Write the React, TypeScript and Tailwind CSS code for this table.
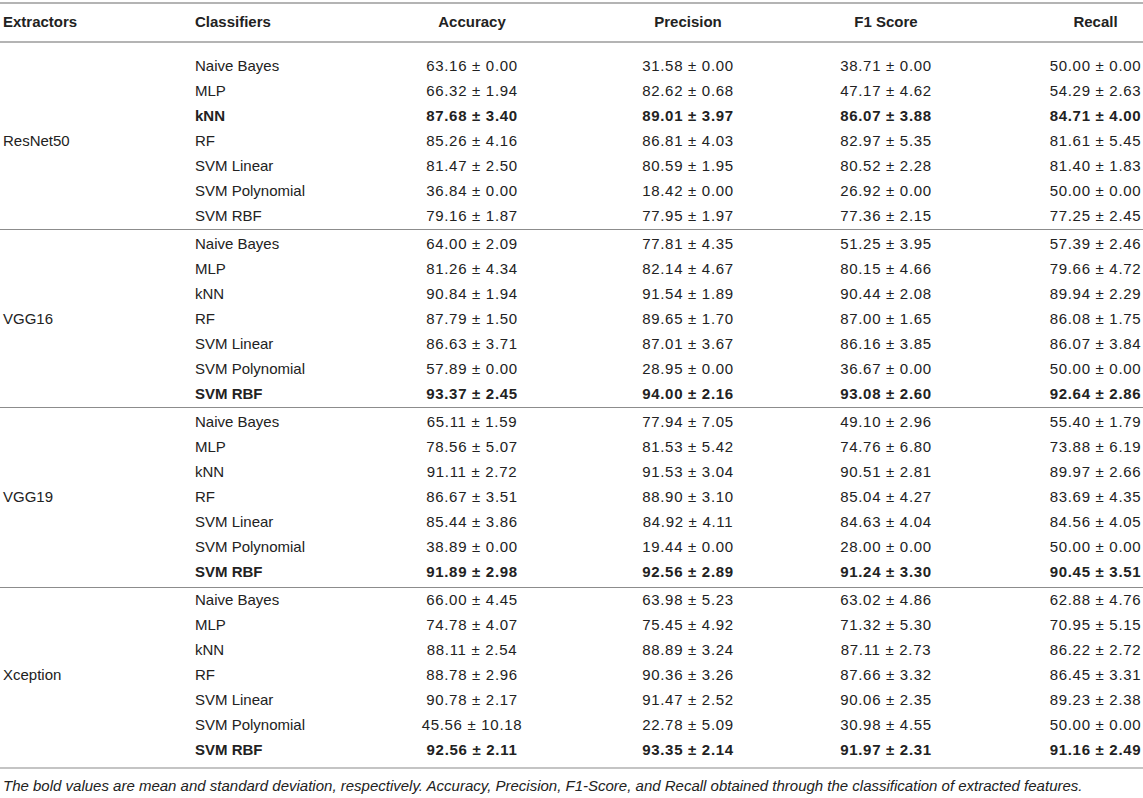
import React from 'react';

type Row = { name: string; acc: string; prec: string; f1: string; rec: string; bold?: boolean };
type Group = { extractor: string; pad: string; rows: Row[] };

const groups: Group[] = [
  {
    extractor: 'ResNet50',
    pad: 'pt-[11px] pb-0',
    rows: [
      { name: 'Naive Bayes', acc: '63.16 ± 0.00', prec: '31.58 ± 0.00', f1: '38.71 ± 0.00', rec: '50.00 ± 0.00' },
      { name: 'MLP', acc: '66.32 ± 1.94', prec: '82.62 ± 0.68', f1: '47.17 ± 4.62', rec: '54.29 ± 2.63' },
      { name: 'kNN', acc: '87.68 ± 3.40', prec: '89.01 ± 3.97', f1: '86.07 ± 3.88', rec: '84.71 ± 4.00', bold: true },
      { name: 'RF', acc: '85.26 ± 4.16', prec: '86.81 ± 4.03', f1: '82.97 ± 5.35', rec: '81.61 ± 5.45' },
      { name: 'SVM Linear', acc: '81.47 ± 2.50', prec: '80.59 ± 1.95', f1: '80.52 ± 2.28', rec: '81.40 ± 1.83' },
      { name: 'SVM Polynomial', acc: '36.84 ± 0.00', prec: '18.42 ± 0.00', f1: '26.92 ± 0.00', rec: '50.00 ± 0.00' },
      { name: 'SVM RBF', acc: '79.16 ± 1.87', prec: '77.95 ± 1.97', f1: '77.36 ± 2.15', rec: '77.25 ± 2.45' },
    ],
  },
  {
    extractor: 'VGG16',
    pad: 'pt-[2px] pb-0',
    rows: [
      { name: 'Naive Bayes', acc: '64.00 ± 2.09', prec: '77.81 ± 4.35', f1: '51.25 ± 3.95', rec: '57.39 ± 2.46' },
      { name: 'MLP', acc: '81.26 ± 4.34', prec: '82.14 ± 4.67', f1: '80.15 ± 4.66', rec: '79.66 ± 4.72' },
      { name: 'kNN', acc: '90.84 ± 1.94', prec: '91.54 ± 1.89', f1: '90.44 ± 2.08', rec: '89.94 ± 2.29' },
      { name: 'RF', acc: '87.79 ± 1.50', prec: '89.65 ± 1.70', f1: '87.00 ± 1.65', rec: '86.08 ± 1.75' },
      { name: 'SVM Linear', acc: '86.63 ± 3.71', prec: '87.01 ± 3.67', f1: '86.16 ± 3.85', rec: '86.07 ± 3.84' },
      { name: 'SVM Polynomial', acc: '57.89 ± 0.00', prec: '28.95 ± 0.00', f1: '36.67 ± 0.00', rec: '50.00 ± 0.00' },
      { name: 'SVM RBF', acc: '93.37 ± 2.45', prec: '94.00 ± 2.16', f1: '93.08 ± 2.60', rec: '92.64 ± 2.86', bold: true },
    ],
  },
  {
    extractor: 'VGG19',
    pad: 'pt-[2px] pb-[2px]',
    rows: [
      { name: 'Naive Bayes', acc: '65.11 ± 1.59', prec: '77.94 ± 7.05', f1: '49.10 ± 2.96', rec: '55.40 ± 1.79' },
      { name: 'MLP', acc: '78.56 ± 5.07', prec: '81.53 ± 5.42', f1: '74.76 ± 6.80', rec: '73.88 ± 6.19' },
      { name: 'kNN', acc: '91.11 ± 2.72', prec: '91.53 ± 3.04', f1: '90.51 ± 2.81', rec: '89.97 ± 2.66' },
      { name: 'RF', acc: '86.67 ± 3.51', prec: '88.90 ± 3.10', f1: '85.04 ± 4.27', rec: '83.69 ± 4.35' },
      { name: 'SVM Linear', acc: '85.44 ± 3.86', prec: '84.92 ± 4.11', f1: '84.63 ± 4.04', rec: '84.56 ± 4.05' },
      { name: 'SVM Polynomial', acc: '38.89 ± 0.00', prec: '19.44 ± 0.00', f1: '28.00 ± 0.00', rec: '50.00 ± 0.00' },
      { name: 'SVM RBF', acc: '91.89 ± 2.98', prec: '92.56 ± 2.89', f1: '91.24 ± 3.30', rec: '90.45 ± 3.51', bold: true },
    ],
  },
  {
    extractor: 'Xception',
    pad: 'pt-0 pb-[4px]',
    rows: [
      { name: 'Naive Bayes', acc: '66.00 ± 4.45', prec: '63.98 ± 5.23', f1: '63.02 ± 4.86', rec: '62.88 ± 4.76' },
      { name: 'MLP', acc: '74.78 ± 4.07', prec: '75.45 ± 4.92', f1: '71.32 ± 5.30', rec: '70.95 ± 5.15' },
      { name: 'kNN', acc: '88.11 ± 2.54', prec: '88.89 ± 3.24', f1: '87.11 ± 2.73', rec: '86.22 ± 2.72' },
      { name: 'RF', acc: '88.78 ± 2.96', prec: '90.36 ± 3.26', f1: '87.66 ± 3.32', rec: '86.45 ± 3.31' },
      { name: 'SVM Linear', acc: '90.78 ± 2.17', prec: '91.47 ± 2.52', f1: '90.06 ± 2.35', rec: '89.23 ± 2.38' },
      { name: 'SVM Polynomial', acc: '45.56 ± 10.18', prec: '22.78 ± 5.09', f1: '30.98 ± 4.55', rec: '50.00 ± 0.00' },
      { name: 'SVM RBF', acc: '92.56 ± 2.11', prec: '93.35 ± 2.14', f1: '91.97 ± 2.31', rec: '91.16 ± 2.49', bold: true },
    ],
  },
];

const cols = 'grid grid-cols-[180px_204px_228px_168px_1fr] items-center';

function Cells({ a, b, c, d, e, num }: { a: string; b: string; c: string; d: string; e: string; num?: boolean }) {
  const t = num ? 'tracking-[0.7px]' : '';
  return (
    <>
      <div className="pl-[5px] whitespace-nowrap">{a}</div>
      <div className={`text-center whitespace-nowrap ${t}`}>{b}</div>
      <div className={`text-center whitespace-nowrap ${t}`}>{c}</div>
      <div className={`text-center whitespace-nowrap ${t}`}>{d}</div>
      <div className={`pl-[78px] text-center whitespace-nowrap ${t}`}>{e}</div>
    </>
  );
}

export default function App() {
  return (
    <div
      className="w-[1143px] h-[798px] bg-white pt-[2px] text-[15px] text-[#222]"
      style={{ fontFamily: '"Liberation Sans", Arial, sans-serif' }}
    >
      <div className="border-t-2 border-b-2 border-[#b4b4b4] flex h-[41px] items-center font-bold">
        <div className="w-[190px] pl-[3px]">Extractors</div>
        <div className={`flex-1 ${cols}`}>
          <Cells a="Classifiers" b="Accuracy" c="Precision" d="F1 Score" e="Recall" />
        </div>
      </div>
      {groups.map((g, gi) => (
        <div
          key={g.extractor}
          className={`flex ${g.pad} ${
            gi < groups.length - 1 ? 'border-b border-[#8c8c8c]' : 'border-b-2 border-[#c4c4c4]'
          }`}
        >
          <div className="w-[190px] pl-[3px] flex items-center">{g.extractor}</div>
          <div className="flex-1">
            {g.rows.map((r) => (
              <div key={r.name} className={`${cols} h-[25px] ${r.bold ? 'font-bold' : ''}`}>
                <Cells a={r.name} b={r.acc} c={r.prec} d={r.f1} e={r.rec} num />
              </div>
            ))}
          </div>
        </div>
      ))}
      <p className="pl-[3px] pt-[6px] text-[15px] italic text-[#222] whitespace-nowrap">
        The bold values are mean and standard deviation, respectively. Accuracy, Precision, F1-Score, and Recall obtained
        through the classification of extracted features.
      </p>
    </div>
  );
}
